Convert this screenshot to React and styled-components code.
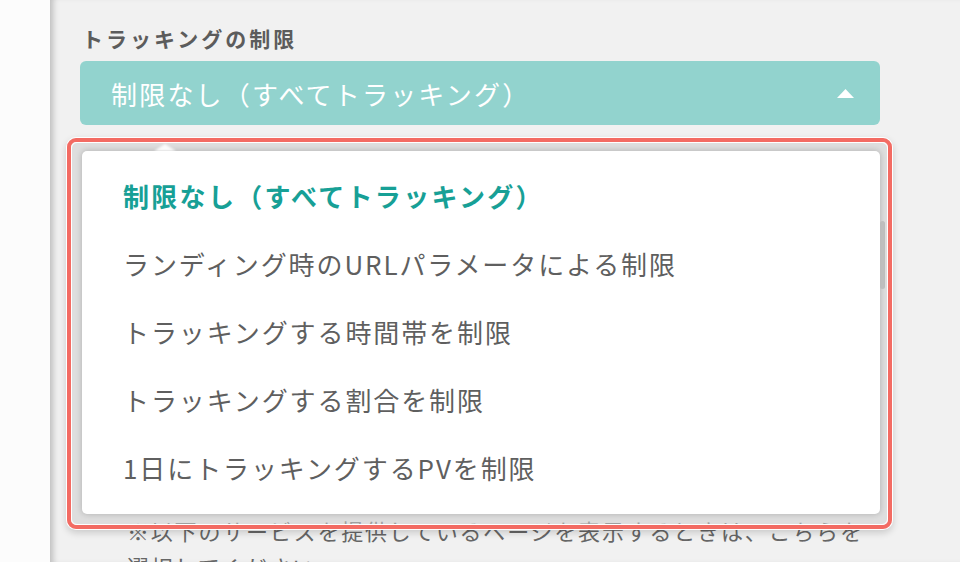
import React from "react";
import styled, { createGlobalStyle } from "styled-components";

const Global = createGlobalStyle`
  html, body { margin: 0; padding: 0; height: 100%; }
  body {
    font-family: "Noto Sans CJK JP", "Noto Sans", sans-serif;
    background: #f1f1f1;
    overflow: hidden;
  }
  #root { height: 100%; }
`;

const Page = styled.div`
  display: flex;
  width: 960px;
  height: 562px;
  overflow: hidden;
`;

const Sidebar = styled.div`
  width: 50px;
  flex: none;
  background: #fcfcfc;
`;

const Main = styled.div`
  flex: 1;
  background: #f1f1f1;
  box-shadow: inset 7px 0 6px -4px rgba(0, 0, 0, 0.22);
  padding: 22px 80px 0 30px;
`;

const Field = styled.div`
  position: relative;
  width: 800px;
`;

const Label = styled.div`
  font-size: 21px;
  line-height: 32px;
  font-weight: 700;
  letter-spacing: 3px;
  color: #5c5c5c;
  padding-left: 2px;
  margin-bottom: 7px;
`;

const SelectButton = styled.div`
  display: flex;
  align-items: center;
  justify-content: space-between;
  height: 64px;
  border-radius: 6px;
  background: #92d3ce;
  color: #fff;
  font-size: 26px;
  letter-spacing: 2.2px;
  padding: 0 26px 0 31px;
  box-sizing: border-box;
`;

const Caret = styled.svg`
  width: 17px;
  height: 10px;
  display: block;
`;

const Help = styled.p`
  margin: 387px 0 0;
  padding-left: 47px;
  font-size: 22px;
  line-height: 36px;
  letter-spacing: 1.8px;
  color: #666;
  white-space: nowrap;
`;

const Popover = styled.div`
  position: absolute;
  left: -13px;
  top: 116px;
  width: 825px;
  box-sizing: border-box;
  border: 4px solid #f36b63;
  border-radius: 9px;
  box-shadow: 0 0 0 1px #fff, 0 3px 7px 1px rgba(0, 0, 0, 0.16);
`;

const Frame = styled.div`
  position: relative;
  border: 1px solid #fff;
  border-radius: 6px;
  background: rgba(205, 205, 205, 0.55);
  padding: 8px 7px 10px 10px;
`;

const Notch = styled.div`
  position: absolute;
  left: 82px;
  top: 1px;
  width: 0;
  height: 0;
  border-left: 11px solid transparent;
  border-right: 11px solid transparent;
  border-bottom: 7px solid rgba(255, 255, 255, 0.9);
  filter: blur(1px);
`;

const Scrollbar = styled.div`
  position: absolute;
  right: 2px;
  top: 78px;
  width: 5px;
  height: 68px;
  border-radius: 3px;
  background: linear-gradient(to right, rgba(0,0,0,0.06), rgba(0,0,0,0.14));
`;

const Panel = styled.ul`
  list-style: none;
  margin: 0;
  background: #fff;
  border-radius: 5px;
  box-shadow: 0 0 6px rgba(0, 0, 0, 0.22);
  padding: 10px 0 13px 41px;
`;

const Option = styled.li`
  height: 68px;
  display: flex;
  align-items: center;
  font-size: 26px;
  letter-spacing: ${(p) => (p.$active ? "2.3px" : "1.9px")};
  font-weight: ${(p) => (p.$active ? 700 : 400)};
  color: ${(p) => (p.$active ? "#17a096" : "#5f5f5f")};
`;

const options = [
  "制限なし（すべてトラッキング）",
  "ランディング時のURLパラメータによる制限",
  "トラッキングする時間帯を制限",
  "トラッキングする割合を制限",
  "1日にトラッキングするPVを制限",
];

export default function App() {
  return (
    <Page>
      <Global />
      <Sidebar />
      <Main>
        <Field>
          <Label>トラッキングの制限</Label>
          <SelectButton>
            <span>制限なし（すべてトラッキング）</span>
            <Caret viewBox="0 0 17 10">
              <path d="M0 10 L8.5 1 L17 10 Z" fill="#fff" />
            </Caret>
          </SelectButton>
          <Help>
            ※以下のサービスを提供しているページを表示するときは、こちらを
            <br />
            選択してください
          </Help>
          <Popover>
            <Frame>
              <Notch />
              <Scrollbar />
              <Panel>
                {options.map((o, i) => (
                  <Option key={o} $active={i === 0}>
                    {o}
                  </Option>
                ))}
              </Panel>
            </Frame>
          </Popover>
        </Field>
      </Main>
    </Page>
  );
}
